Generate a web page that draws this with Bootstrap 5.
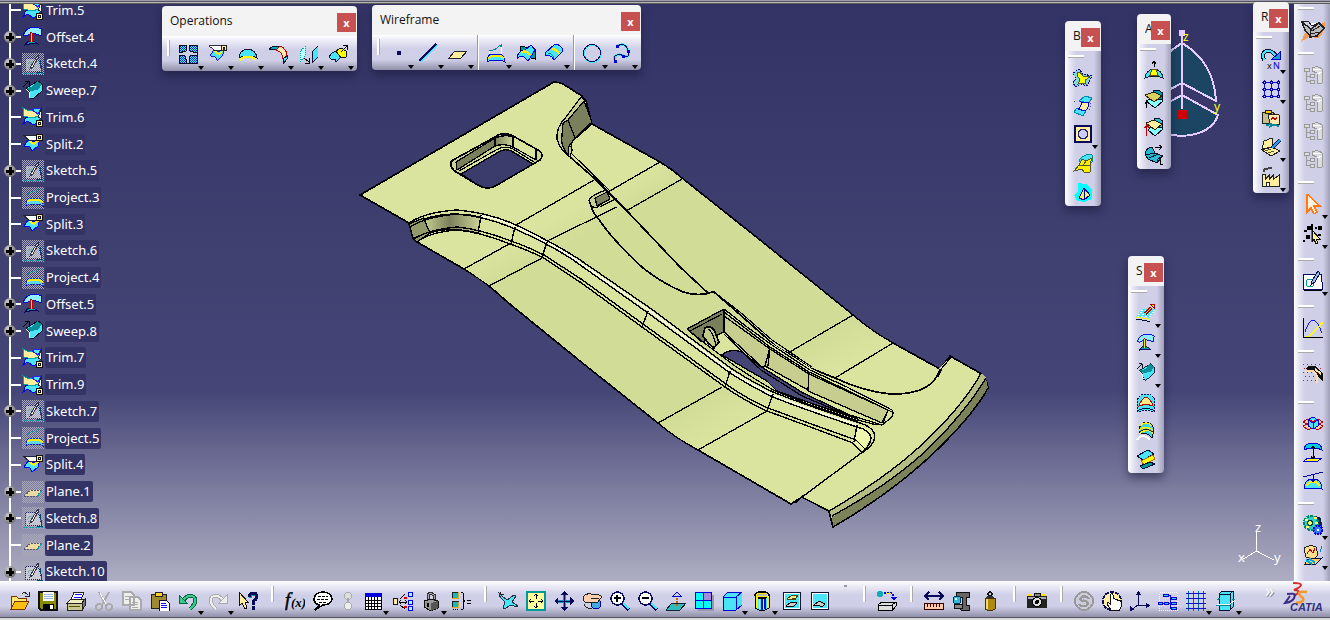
<!DOCTYPE html>
<html lang="en">
<head>
<meta charset="utf-8">
<meta name="viewport" content="width=device-width, initial-scale=1">
<title>CATIA - Generative Shape Design</title>
<link href="https://cdn.jsdelivr.net/npm/bootstrap@5.3.0/dist/css/bootstrap.min.css" rel="stylesheet">
<style>
:root { --navy:#333366; --face:#cfcfe7; --edge:#9090aa; }
body { font-family:"Noto Sans","Open Sans",sans-serif; font-size:13px; background:var(--navy); }
.strip { height:4px; background:linear-gradient(#9c9cae 0 1px,#55555f 1px 2px,#b8b8b8 2px 3px,#5c5c5c 3px 4px); }
.scene { background:linear-gradient(#333366 0%,#3f3f70 42%,#454577 67%,#75759a 82%,#adadc2 100%); min-height:0; }
.part { left:350px; top:71px; shape-rendering:crispEdges; }
.compass { right:64px; top:22px; shape-rendering:crispEdges; }
.triad { right:8px; bottom:12px; shape-rendering:crispEdges; }
.scene svg text { font-family:"Noto Sans",sans-serif; }
.defs { width:0; height:0; }

/* specification tree */
.tree-clip { inset:0 auto 0 0; width:160px; overflow:hidden; }
.tree { margin:-7px 0 0; height:calc(100% + 11px); color:#fff; }
.tree::before { content:""; position:absolute; left:9px; top:0; bottom:0; width:2px; background:#fff; }
.tree li { flex:1 1 0; min-height:0; padding-left:22px; position:relative; }
.tree li::before { content:""; position:absolute; left:11px; width:10px; height:2px; background:#fff; }
.tree .ico { width:22px; height:22px; shape-rendering:crispEdges; }
.tree a { color:#fff; background:var(--navy); line-height:21px; padding:0 2px 0 1px; border-radius:2px; margin-left:1px; }
.knot { position:absolute; left:4px; width:12px; height:12px; border-radius:50%; background:radial-gradient(circle at 35% 30%,#ccc,#777 70%); }
.knot::before,.knot::after { content:""; position:absolute; background:#000; left:2px; top:5px; width:8px; height:3px; }
.knot::after { left:5px; top:2px; width:3px; height:8px; }

/* toolbars */
.tool { flex:none; position:relative; border:0; padding:0; background:none; width:28px; height:28px; display:flex; align-items:center; justify-content:center; }
.tool svg { width:20px; height:20px; display:block; flex:none; shape-rendering:crispEdges; }
.slim { width:22px; }
.drop::after { content:""; position:absolute; right:0; bottom:-2px; border:3px solid transparent; border-top:4px solid #000; border-bottom:0; }
.across .drop { width:30px; padding-right:2px; }
.down .drop { height:30px; padding-bottom:2px; }
.down .drop::after { right:-1px; bottom:1px; }
.down .tool { align-self:center; }
.across { background:linear-gradient(#fff,#f2f2fa 3px,var(--face) 14px,var(--face) 70%,var(--edge)); }
.down { background:linear-gradient(90deg,#fff,#e6e6f4 5px,var(--face) 11px,var(--face) 80%,#a0a0b8); }
.grip { flex:none; background:#aaa; border:0 solid #fff; }
.across .grip { width:3px; height:16px; border-left-width:2px; margin:0 7px 0 9px; align-self:flex-start; }
.down .grip { width:16px; height:3px; border-top-width:2px; margin:8px 0 6px 3px; align-self:flex-start; }
.down .far { margin-top:14px; }
.rule { flex:none; width:2px; align-self:stretch; background:#fff; border-left:1px solid #999; margin:0 3px; }
.bottom { height:37px; border-bottom:1px solid #55555f; overflow:hidden; }
.bottom .tool { margin-top:4px; }
.bottom .drop::after { bottom:0; }
.bottom .grip { margin-top:5px; }
.foot { height:2px; background:#d8d8d8; }
.tick { width:20px; align-self:flex-start; height:6px; }
.tick i { display:block; width:3px; height:2px; background:#999; margin:4px 0 0 10px; }
.side { width:36px; padding:3px 0 0 1px; }
.side .big { height:28px; margin:0; }
.side .big svg { width:26px; height:26px; }

/* floating palettes */
.pal { border-radius:4px; box-shadow:0 5px 9px rgba(20,20,50,.5); overflow:hidden; }
.pal header { height:30px; background:#f3f3f3; padding-left:8px; color:#111; white-space:nowrap; overflow:hidden; }
.pal h2 { font-family:"Open Sans","Noto Sans",sans-serif; font-size:12px; line-height:30px; margin:0; font-weight:400; min-width:0; overflow:hidden; }
.shut { flex:none; width:19px; height:19px; border:0; padding:0; margin:7px 1px 0 0; background:#c75050; color:#fff; font-weight:700; font-size:11px; line-height:16px; }
.pal .across { height:35px; padding:0 3px 0 5px; }
.pal .across .grip { margin:4px 4px 0 0; }
.pal .down .grip { margin:4px 0 6px 3px; }
.slender { width:36px; }
.slim-pal { width:34px; }
.logo { width:52px; height:37px; flex:none; }
.more { color:#fff; text-shadow:1px 1px #888; text-decoration:none; font-size:18px; line-height:26px; margin:-4px 0 0 23px; }
</style>
</head>
<body class="vh-100 d-flex flex-column overflow-hidden">

<svg class="defs position-absolute" aria-hidden="true">
<defs>
<pattern id="dot" width="2" height="2" patternUnits="userSpaceOnUse"><path fill="#aaaabb" d="M0 0h1v1H0zM1 1h1v1H1z"/></pattern>
<pattern id="chk" width="2" height="2" patternUnits="userSpaceOnUse"><path fill="#4ae4f8" d="M0 0h2v2H0z"/><path fill="#0a30c0" d="M0 0h1v1H0zM1 1h1v1H1z"/></pattern>
</defs>
</svg>
<svg class="d-none" aria-hidden="true">
<symbol id="trim" viewBox="0 0 22 22"><path d="M1 18l3-7 6 1 4-7 5-3 1 9-8 8-2-1-4-3z" fill="#4ae4f8" stroke="#00f"/><path d="M1 2l6 3 4-1 6 6-7 2-8-2z" fill="#ffef9c" stroke="#0aa"/><path d="M10 4l4-2 5 1-3 5z" fill="#4ae4f8" stroke="#22f"/><path d="M19.500 1v12l-3-2z" fill="#fff" stroke="#223"/><path d="M14.500 14.500h6v6h-6z" fill="#ffef9c" stroke="#111"/><path d="M16.500 16.500h2v2h-2z" fill="#fff" stroke="#111"/></symbol>
<symbol id="split" viewBox="0 0 22 22"><path d="M2 13l4-6 5 2 7-4-2 8-6 5-2-4z" fill="#4ae4f8" stroke="#00f"/><path d="M7 8l5 3 5-4" fill="none" stroke="#fe0" stroke-width="2"/><path d="M1 2h14v5H7z" fill="#fff" stroke="#223"/><path d="M14.500 1.500h6v6h-6z" fill="#ffef9c" stroke="#111"/><path d="M16.500 3.500h2v2h-2z" fill="#fff" stroke="#111"/></symbol>
<symbol id="offset" viewBox="0 0 22 22"><path d="M1 9Q7-3 20 3l-1 7Q11 5 4 10z" fill="#8fefff" stroke="#00d"/><path d="M3 19q5-8 13-1-6-1-13 1z" fill="#099" stroke="#006"/><path d="M9.500 16V8" stroke="#b00" stroke-width="3"/><path d="M7 9l2-4 3 4z" fill="#b00"/><path d="M9.500 16V7" stroke="#ff0"/></symbol>
<symbol id="sweep" viewBox="0 0 22 22"><path d="M4 8l3 3 1 7 3 1 9-8V4l-4-3z" fill="#4ae4f8" stroke="#012"/><path d="M4 8l6-1 5-6 5 3-4 6-8 1z" fill="#0a9098"/><path d="M4 9l3 3 1 6" fill="none" stroke="#fff"/><path d="M1 7l6-6M3 1h4v4" fill="none" stroke="#000"/></symbol>
<symbol id="sketch" viewBox="0 0 22 22"><path fill="url(#dot)" d="M0 0h22v22H0z"/><path d="M3.500 5.500h13l3 13h-16z" fill="#eee" fill-opacity=".5" stroke="#226" stroke-dasharray="1 1"/><path d="M18 7l2 12h-5" fill="none" stroke="#047"/><path d="M9 15q-5 0-2-5l4-1" fill="none" stroke="#7aa"/><path d="M16 2l-7 11-1 3 3-2 6-11z" fill="#eec" stroke="#335"/><path d="M1 20.500h20" stroke="#0aa" stroke-dasharray="2 1"/></symbol>
<symbol id="project" viewBox="0 0 22 22"><path fill="url(#dot)" d="M0 0h22v22H0z"/><path d="M5 8q5-5 8-3l5-3" fill="none" stroke="#0aa" stroke-dasharray="2 1"/><path d="M4 19q0-7 4-8h9q4 2 4 8l-4-2H8z" fill="#5cd8ee" stroke="#11b" stroke-dasharray="2 1"/><path d="M5 15l4-2h8l4 2" fill="none" stroke="#fe0" stroke-width="2"/></symbol>
<symbol id="plane" viewBox="0 0 22 22"><path fill="url(#dot)" d="M0 0h22v22H0z"/><path d="M2 15l7-6h11l-5 6z" fill="#ecdca0" stroke="#557" stroke-dasharray="2 1"/><path d="M15 16l5-7" stroke="#0aa"/></symbol>

<symbol id="join" viewBox="0 0 20 20"><path d="M1 1h8l-1 6-7 2zM11 1h8v8l-7-2zM1 11l6 1 2 7H1zM12 12l7-1v8h-8z" fill="url(#chk)" stroke="#012"/></symbol>
<symbol id="dome" viewBox="0 0 20 20"><path d="M1 14q0-8 9-9 8 1 9 9l-4-2H5z" fill="#4ae4f8" stroke="#113"/><path d="M2 16l4-3h8l4 3" fill="none" stroke="#ff0" stroke-width="2"/></symbol>
<symbol id="fillet" viewBox="0 0 20 20"><path d="M1 5l5-3h6l-4 4z" fill="#0ab" stroke="#113"/><path d="M8 6l4-4q7 3 7 10l-4 3q0-7-7-9z" fill="#ffe9b0" stroke="#b00"/><path d="M15 15l4-3v3l-4 5z" fill="#4ae4f8" stroke="#113"/></symbol>
<symbol id="mirror" viewBox="0 0 20 20"><path d="M2 8l5-6v10l-5 6z" fill="#bff" stroke="#0aa" stroke-dasharray="1 1"/><path d="M14 8l6-6v11l-6 6z" fill="#4ae4f8" stroke="#113"/><path d="M6 14l5 4M11 14v5H7" stroke="#000" fill="none"/></symbol>
<symbol id="extrap" viewBox="0 0 20 20"><path d="M1 13q3-5 7-6l5 6-5 5q0-4-4-2z" fill="#4ae4f8" stroke="#113"/><path d="M8 7l5-3 5 3v6l-5 1z" fill="#ff0" stroke="#111"/><path d="M13 8l6-6M15 1.500h4v4" fill="none" stroke="#000"/></symbol>
<symbol id="point" viewBox="0 0 20 20"><path fill="#0a0a5a" d="M9 8h4v4H9z"/></symbol>
<symbol id="line" viewBox="0 0 20 20"><path stroke="#4ae4f8" stroke-width="2" d="M2 19L19 2"/><path stroke="#0a0a5a" stroke-width="1.500" d="M1 18L18 1"/></symbol>
<symbol id="pln" viewBox="0 0 20 20"><path d="M1 15l6-7h12l-6 7z" fill="#ffef9c" stroke="#223"/></symbol>
<symbol id="proj" viewBox="0 0 20 20"><path d="M3 8q7-1 9-4 3-3 3 0V1" fill="none" stroke="#089"/><path d="M3 8v6M15 4v9" stroke="#fff"/><path d="M1 19q0-6 4-8h9q5 2 5 8l-4-2H5z" fill="#4ae4f8" stroke="#00d"/><path d="M2 15l4-2h8l4 2" fill="none" stroke="#fe0" stroke-width="2"/></symbol>
<symbol id="inter" viewBox="0 0 20 20"><path d="M4 3l15 3v10L4 12z" fill="#099" stroke="#000"/><path d="M1 14q2-7 8-7l6-5 4 5-7 11-4-4-4-1-3 3z" fill="#4ae4f8" stroke="#00d"/><path d="M5 9q6-2 9 3" fill="none" stroke="#fe0" stroke-width="2"/></symbol>
<symbol id="para" viewBox="0 0 20 20"><path d="M1 10L11 1q7 1 8 7l-9 9-2-3q-3-2-7-2z" fill="#4ae4f8" stroke="#00d"/><path d="M4 10q4 0 6 5" fill="none" stroke="#089"/><path d="M8 6q5 0 7 5" fill="none" stroke="#fe0" stroke-width="2"/></symbol>
<symbol id="circ" viewBox="0 0 20 20"><circle cx="10.500" cy="10.500" r="8.500" fill="none" stroke="#4ae4f8" stroke-width="2"/><circle cx="10" cy="10" r="8.500" fill="none" stroke="#0a0a5a" stroke-width="1"/></symbol>
<symbol id="spl" viewBox="0 0 20 20"><path d="M5 3q8-4 11 4t-4 6q-4-2-7-1-4 1-2 6" fill="none" stroke="#4ae4f8" stroke-width="2.500"/><path d="M5 3q8-4 11 4t-4 6q-4-2-7-1-4 1-2 6" fill="none" stroke="#0a0a5a"/><path d="M4 2h3v3H4zM15 7h3v3h-3zM10 12h3v3h-3zM2 17h3v3H2z" fill="#00d"/></symbol>

<symbol id="fillp" viewBox="0 0 20 20"><path d="M0 5l6-4 4 5 9 2-5 10-6-2-5 3-3-4 3-4z" fill="#7fd8d8" stroke="#009" stroke-dasharray="2 1"/><path d="M4 4q4 0 6 4l7 1-5 3 1 4q-4-2-8 0l2-4-3-5z" fill="#ff0" stroke="#553"/></symbol>
<symbol id="loft" viewBox="0 0 20 20"><path d="M6 5l6-5 7 2-3 5zM1 16l3-4 9 3-3 5z" fill="#4ae4f8" stroke="#08a"/><path d="M5 13q4-2 3-7l8 1q-1 6-4 8z" fill="#ffef9c" stroke="#00d"/><path d="M1 5l3 2M16 13l3 2M17 4v9" stroke="#556" stroke-dasharray="1 2"/></symbol>
<symbol id="hole" viewBox="0 0 20 20"><path d="M2 2h16v16H2z" fill="#ffef9c" stroke="#0a0a5a" stroke-width="2"/><circle cx="10" cy="10" r="4.500" fill="#ccf" stroke="#226" stroke-width="1.500"/></symbol>
<symbol id="blend" viewBox="0 0 20 20"><path d="M6 6q6-7 13-5v7l-7 6z" fill="#4ae4f8" stroke="#089"/><path d="M1 17l5-6 3-6 4 2 6-3-2 7v7l-5 1-3-4z" fill="#fe0" stroke="#553"/><path d="M6 11l4 1 3-5M10 12l7-1" stroke="#553" fill="none"/></symbol>
<symbol id="poly" viewBox="0 0 20 20"><path d="M5 1l8 1 6 5v10l-7 3-8-1-3-6 4-3z" fill="#0ff"/><path d="M6 16l5-10 6 7-6 5zM11 6v11" fill="#ffef60" stroke="#00a"/></symbol>
<symbol id="bump" viewBox="0 0 20 20"><path d="M1 17q1-8 9-9 8 1 9 9-4-2-9-2t-9 2z" fill="#4ae4f8" stroke="#123"/><path d="M6 14l2-6h4l2 6z" fill="#ff0" stroke="#650"/><path d="M10 6V1M8 3l2-3 2 3" stroke="#000" fill="none"/></symbol>
<symbol id="lay" viewBox="0 0 20 20"><path d="M9 2l5-1 5 3-1 7-4 3z" fill="#099" stroke="#012"/><path d="M2 12l4-2 12 1 1 1-8 7z" fill="#8ff" stroke="#012"/><path d="M1 6l9-3 8 4-8 6z" fill="#d8d060" stroke="#320"/><path d="M2.500 19v-6M1 15l2-3 2 3" stroke="#000" fill="none"/></symbol>
<symbol id="lay2" viewBox="0 0 20 20"><path d="M10 2l4-1 5 3-1 7-4 3z" fill="#29b8cf" stroke="#012"/><path d="M4 13l3-3 11 1 1 1-8 7z" fill="#8ff" stroke="#012"/><path d="M2 6l8-3 8 4-7 6z" fill="#ffef9c" stroke="#320"/><path d="M2.500 19V10M1 11l2-3 2 3" stroke="#b00" stroke-width="1.500" fill="none"/></symbol>
<symbol id="dev" viewBox="0 0 20 20"><path d="M1 9q1-6 7-7l3 6 8 3-6 7-9-4z" fill="#29b8cf" stroke="#012"/><path d="M1 10l10-2M5 13l9-4M13 18v-3l5-4" stroke="#012" fill="none"/><path d="M11 2h6M15 0l3 2-3 3M16 15v4h3" stroke="#000" fill="none"/></symbol>
<symbol id="repeat" viewBox="0 0 20 20"><path d="M3 11Q0 3 6 2t10 7" fill="none" stroke="#013" stroke-width="4"/><path d="M3 11Q0 3 6 2t10 7" fill="none" stroke="#4ae4f8" stroke-width="2"/><path d="M11 10h8V3z" fill="#29c" stroke="#00b"/><text x="6" y="20" font-size="9" fill="#111">x</text><text x="12" y="20" font-size="9" fill="#00d">N</text></symbol>
<symbol id="gridp" viewBox="0 0 20 20"><path d="M3.500 1v18M10.500 1v18M17.500 1v18M1 3.500h18M1 10.500h18M1 17.500h18" stroke="#11c"/><g fill="#ccf" stroke="#00b"><path d="M2.500 2.500h2v2h-2zM9.500 2.500h2v2h-2zM16.500 2.500h2v2h-2zM2.500 9.500h2v2h-2zM9.500 9.500h2v2h-2zM16.500 9.500h2v2h-2zM2.500 16.500h2v2h-2zM9.500 16.500h2v2h-2zM16.500 16.500h2v2h-2z"/></g></symbol>
<symbol id="clipcat" viewBox="0 0 20 20"><path d="M1 3h10l3 2v9H1z" fill="#c8bd8c" stroke="#222"/><path d="M4 1h6v3H4z" fill="#fc0" stroke="#222"/><path d="M7 5l11 1v9H9z" fill="#ffe9b0" stroke="#222"/><path d="M10 11l2-3 2 3 2-3" fill="none" stroke="#b00"/><path d="M8 18q6-4 10 0M5 16l6-1" stroke="#089" stroke-width="2" fill="none"/></symbol>
<symbol id="book" viewBox="0 0 20 20"><path d="M1 12L3 4l8-3 1 9zM1 13l10-3 8 4-9 5z" fill="#ffef9c" stroke="#222"/><path d="M4 14l6-2M7 16l6-2" stroke="#553"/><path d="M19 3l-8 8" stroke="#013" stroke-width="3"/><path d="M19 3l-8 8" stroke="#29f" stroke-width="1.500"/></symbol>
<symbol id="plant" viewBox="0 0 20 20"><path d="M1.500 19V7.500h3V12l4-4v4l4-4v4l6-4v11z" fill="#ffef9c" stroke="#222"/><path d="M3 5q0-4 3-3 3-2 5-1" stroke="#444" stroke-width="2" fill="none"/><path d="M5.500 19v-4h3v4z" fill="#fff" stroke="#222"/></symbol>
<symbol id="vec" viewBox="0 0 20 20"><path d="M0 14l6-8h14l-6 9q-7-2-14-1z" fill="#4ae4f8"/><path d="M2 11.500h15M4 9.500h14M1 13.500h14M5 7.500h14" stroke="#fff" stroke-dasharray="2 2"/><path d="M0 15q7-1 14 2" stroke="#ff0" fill="none"/><path d="M0 17q7-1 14 2" stroke="#013" fill="none"/><path d="M9 11l6-6" stroke="#a00" stroke-width="3"/><path d="M9 11l6-6" stroke="#fe0"/><path d="M14.500 1.500h4v4z" fill="#fe0" stroke="#a00"/></symbol>
<symbol id="fillc" viewBox="0 0 20 20"><path d="M2 19Q-2 1 10 1t8 18l-8-2z" fill="#4ae4f8" stroke="#0a0a5a" stroke-dasharray="2 1"/><path d="M3 13q2-7 7-9 5 2 7 9l-7-2z" fill="#fe8" stroke="#b00"/><path d="M1 18q9-5 18 0" stroke="#013" fill="none"/></symbol>
<symbol id="multi" viewBox="0 0 20 20"><path d="M3 9q1-7 7-8 7 1 8 8l-2 8q-4-6-12-4z" fill="#39d5e5" stroke="#012"/><path d="M3 9q7-5 14 0M3 13q7-7 14-1M4 5q6-6 12 0" fill="none" stroke="#fe0" stroke-width="1.500"/><path d="M3 11q7-5 14 0" fill="none" stroke="#222"/><path d="M1 19q5-8 13 0" fill="none" stroke="#fff" stroke-width="2"/></symbol>
<symbol id="blnd" viewBox="0 0 20 20"><path d="M1 7l11-6 6 4-11 6z" fill="#4ae4f8" stroke="#013"/><path d="M5 12l12-6 2 4-11 6z" fill="#ff0" stroke="#b60"/><path d="M4 17l10-4 5 2-12 5z" fill="#099" stroke="#013"/></symbol>

<symbol id="wb" viewBox="0 0 26 26"><path d="M1 25l4-9 20-11q0 12-7 16l-9-1z" fill="#f09a58"/><path d="M2 5l9 7-1 7-5-6zM11 12l8-6 5 5-7 8-7 1z" fill="#bbb" stroke="#222" stroke-width="1.500"/><path d="M2 5l6-1 4 5 6-3" fill="#fff" stroke="#222"/><path d="M12 14l8-5M11 17l8-2" stroke="#222"/></symbol>
<symbol id="ghost" viewBox="0 0 20 20"><path d="M1.500 3.500h5v3h-5zM3.500 7v10M3 11.500h4M3 16.500h4M7.500 9.500h4v3h-4zM7.500 15.500h4v3h-4zM9 3q6-3 10 1v14l-5 1V8L9 6z" fill="#ddd" stroke="#999"/><path d="M10 4.500h8M14 9l5-2" stroke="#fff"/></symbol>
<symbol id="sel" viewBox="0 0 20 20"><path d="M4 0l13 12h-6l3 6-3 2-3-6-4 4z" fill="#fff0e0" stroke="#ff7a10" stroke-width="1.500"/></symbol>
<symbol id="trap" viewBox="0 0 20 20"><g fill="#000"><ellipse cx="7" cy="4" rx="3" ry="2.500"/><ellipse cx="17" cy="4" rx="2.500" ry="2"/><ellipse cx="5" cy="13" rx="2.500" ry="2"/><path d="M1 6h3v2H1zM0 16h2v2H0zM8 0h2v2H8zM12 3h2v2h-2zM15 10h3v2h-3z"/></g><path d="M8 6v12" stroke="#099"/><path d="M9 6l8 9h-4l2 4-2 1-2-5-2 3z" fill="#ffef9c" stroke="#111"/></symbol>
<symbol id="skt" viewBox="0 0 20 20"><path d="M.500 3.500h18l1 15H.500z" fill="#fff" stroke="#0a0a5a"/><circle cx="7" cy="12" r="4" fill="none" stroke="#099"/><path d="M15 0L9 10l-1 4 4-3 5-9z" fill="#9bd" stroke="#0a0a5a"/><path d="M19 19H1" stroke="#000"/></symbol>
<symbol id="graph" viewBox="0 0 20 20"><path d="M.500 0v19.500H20" fill="none" stroke="#000"/><path d="M2 14Q10-10 19 15" fill="none" stroke="#11f"/><path d="M2 18.500h4L20 4" stroke="#ff0" stroke-width="1.500" fill="none"/></symbol>
<symbol id="wand" viewBox="0 0 20 20"><path d="M0 1.500h20M1 5.500h18M0 9.500h18M2 13.500h16M0 17.500h14" stroke="#b22" stroke-dasharray="1 3"/><path d="M2 6l4-3h6l8 8v8l-5-5-3-5z" fill="#111"/><path d="M2 7.500h8l4 5v7M12 6l6 5" stroke="#fda" stroke-width="2" fill="none"/></symbol>
<symbol id="cube3" viewBox="0 0 20 20"><path d="M0 8l5-3 15 7-5 4zM20 8l-5-3L0 12l5 4z" fill="#fc9" stroke="#b00"/><path d="M5 6l5-3 5 3v6l-5 3-5-3zM5 6l5 3 5-3M10 9v6" fill="#4ae4f8" stroke="#00d"/></symbol>
<symbol id="updn" viewBox="0 0 20 20"><path d="M1 8q0-7 9-7t9 7l-5-2H6z" fill="#0cd" stroke="#00d"/><path d="M1 19l4-3h14l-4 3z" fill="#ff0" stroke="#00d"/><path d="M10 5v12M8 7l2-3 2 3M8 14l2 3 2-3" stroke="#000" fill="none"/></symbol>
<symbol id="curv" viewBox="0 0 20 20"><path d="M1 19q0-10 9-10t9 10l-4-1H5z" fill="#4ae4f8" stroke="#00d"/><path d="M3 16l4-4h6l4 4" fill="none" stroke="#fe0" stroke-width="1.500"/><path d="M0 7l20-5M10 4v7M8 9l2 3 2-3" stroke="#00a" fill="none"/></symbol>
<symbol id="gears" viewBox="0 0 20 20"><path d="M12 1l6 2 1 8-4 4z" fill="#124"/><circle cx="8" cy="8" r="7" fill="#3cc" stroke="#086" stroke-width="2" stroke-dasharray="3 1"/><path d="M2 5h3M11 3h3M3 12h3M12 8h3" stroke="#ff6" stroke-width="2"/><circle cx="7" cy="8" r="2.500" fill="#ff6" stroke="#043" stroke-width="1.500"/><circle cx="15" cy="15" r="4.500" fill="#37f" stroke="#00c" stroke-width="2" stroke-dasharray="2 1"/><path fill="#fff" d="M14 14h2v2h-2z"/></symbol>
<symbol id="hand2" viewBox="0 0 20 20"><path d="M1 3q5-4 12-1l2 8-4 4-8-2z" fill="#ffdf8c" stroke="#222"/><path d="M4 9l3-5 3 4 2-5" stroke="#b00" fill="none"/><path d="M2 19q2-7 9-5l8-1-6 6z" fill="#fc6" stroke="#013"/><path d="M3 15l6 4M6 13l6 5" stroke="#0ad" stroke-width="2"/><path d="M19 1l-2 6" stroke="#08c"/></symbol>

<symbol id="open" viewBox="0 0 20 20"><path d="M1 18V5h5l2 2h8v4" fill="#ffe870" stroke="#730"/><path d="M1 18l4-8h14l-4 8z" fill="#f8c010" stroke="#730"/><path d="M12 3q3-3 6 1M19 1v4h-4" fill="none" stroke="#222"/></symbol>
<symbol id="save" viewBox="0 0 20 20"><path d="M1 1h18v18H3l-2-2z" fill="#8a8a00" stroke="#111" stroke-width="1.500"/><path d="M5 1h11v9H5z" fill="#fff"/><path d="M6 3.500h9M6 5.500h9M6 7.500h9" stroke="#9bd"/><path d="M5 13h11v6H5z"/><path fill="#fff" d="M12 14h3v4h-3z"/></symbol>
<symbol id="print" viewBox="0 0 20 20"><path d="M5 9L8 1h10l-3 8z" fill="#fff" stroke="#222"/><path d="M9 3.500h7M8 6.500h7" stroke="#11f"/><path d="M1 12l4-4h14l-3 4z" fill="#eeecc0" stroke="#222"/><path d="M1 12h15v7H1z" fill="#c8c890" stroke="#222"/><path d="M16 12l3-4v7l-3 4z" fill="#777" stroke="#222"/><path d="M3 15.500h11" stroke="#550"/></symbol>
<symbol id="cut" viewBox="0 0 20 20"><path d="M5 1l7 13M15 1L8 14" stroke="#aaa" stroke-width="2"/><circle cx="5" cy="16" r="3" fill="none" stroke="#aaa" stroke-width="2"/><circle cx="15" cy="16" r="3" fill="none" stroke="#aaa" stroke-width="2"/><path d="M6 2l6 11" stroke="#fff"/></symbol>
<symbol id="copy" viewBox="0 0 20 20"><path d="M1 1h8l3 3v10H1zM8 6h8l3 3v10H8z" fill="#eee" stroke="#aaa" stroke-width="1.500"/><path d="M3 5.500h5M3 8.500h4M10 11.500h6M10 13.500h6M10 16.500h6" stroke="#aaa"/></symbol>
<symbol id="paste" viewBox="0 0 20 20"><path d="M1 3h15v14H1z" fill="#a08a30" stroke="#222"/><path d="M5 1h7v4H5z" fill="#fc3" stroke="#222"/><path d="M9 9h7l3 3v8H9z" fill="#fff" stroke="#113"/><path d="M11 12.500h5M11 14.500h6M11 16.500h6" stroke="#11f"/></symbol>
<symbol id="undo" viewBox="0 0 20 20"><path d="M4 11q6-9 12-5 4 5-4 12" fill="none" stroke="#064" stroke-width="4"/><path d="M4 11q6-9 12-5 4 5-4 12" fill="none" stroke="#3ec98a" stroke-width="2"/><path d="M1 4v8h8z" fill="#3ec98a" stroke="#064"/></symbol>
<symbol id="redo" viewBox="0 0 20 20"><path d="M16 11Q10 2 4 6q-4 5 4 12" fill="none" stroke="#aaa" stroke-width="4"/><path d="M16 11Q10 2 4 6q-4 5 4 12" fill="none" stroke="#eee" stroke-width="2"/><path d="M19 4v8h-8z" fill="#eee" stroke="#aaa"/></symbol>
<symbol id="help" viewBox="0 0 20 20"><path d="M1 1l9 10H7l2 6-2 1-3-6-3 3z" fill="#ffef9c" stroke="#111"/><path d="M12 7q0-4 4-4t3 3q0 2-4 4v4M15 16v3" fill="none" stroke="#099" stroke-width="3"/><path d="M11 6q0-4 4-4t4 4q0 2-4 4v4M15 15v4" fill="none" stroke="#0a0a5a" stroke-width="3"/></symbol>
<symbol id="fx" viewBox="0 0 20 20"><text x="0" y="15" font-family="Liberation Serif,serif" font-style="italic" font-size="19" stroke="#000" stroke-width=".500">f</text><text x="6" y="16" font-family="Liberation Serif,serif" font-style="italic" font-weight="700" font-size="13">(x)</text></symbol>
<symbol id="note" viewBox="0 0 20 20"><path d="M6 14q-5-2-5-6Q2 1 10 1t9 7q-1 6-9 6l-8 5z" fill="#fff" stroke="#000" stroke-width="1.500"/><path d="M5 5.500h10M4 8.500h12M6 11.500h8" stroke="#000" stroke-dasharray="3 1"/></symbol>
<symbol id="ghost2" viewBox="0 0 20 20"><circle cx="10" cy="5" r="3.500" fill="#ddd" stroke="#aaa"/><path d="M10 7v5" stroke="#aaa" stroke-width="2"/><circle cx="10" cy="15" r="3.500" fill="#eee" stroke="#aaa"/></symbol>
<symbol id="tbl" viewBox="0 0 20 20"><path d="M2.500 2.500h16v16h-16z" fill="#fff" stroke="#000"/><path d="M2 2h17v4H2z" fill="#00d"/><path d="M2 9.500h16M2 12.500h16M5.500 6v13M8.500 6v13M11.500 6v13M14.500 6v13M2 15.500h16" stroke="#000"/></symbol>
<symbol id="links" viewBox="0 0 20 20"><path d="M.500 7.500h4v6h-4z" fill="#ffef9c" stroke="#113"/><path d="M7 11h6M7 8l5-5M7 14l5 4M8 9l-2 2 2 2M12 9l2 2-2 2" stroke="#000" fill="none"/><path d="M15.500 1.500h4v4h-4zM15.500 9.500h4v4h-4zM15.500 15.500h4v4h-4z" fill="#9ff" stroke="#00e"/><path d="M11 6.500h3M11 15.500h3" stroke="#d00" stroke-width="2"/></symbol>
<symbol id="lock" viewBox="0 0 20 20"><path d="M7 9V4q2-4 6 0v6" fill="none" stroke="#333" stroke-width="3"/><path d="M7 8V4q2-3 6 0v5" fill="none" stroke="#aaa"/><path d="M3 10l7-2 7 2v7l-7 3-7-4z" fill="#999" stroke="#111"/><path d="M10 12l7-2v7l-7 3z" fill="#555"/><path d="M7 12v4" stroke="#000" stroke-width="2"/></symbol>
<symbol id="equ" viewBox="0 0 20 20"><path d="M1 1h6v6H1zM1 10h6v6H1z" fill="#1bb" stroke="#222"/><path d="M1 7.500h6.500V1M1 16.500h6.500v-6" stroke="#da2" fill="none"/><path d="M2 18.500h5" stroke="#000" stroke-dasharray="1 1"/><path d="M10 1q3 0 2 5 0 4 2 4-2 0-2 5 1 4-2 4" fill="none" stroke="#000"/><path d="M16 9.500h4M16 12.500h4" stroke="#000"/></symbol>
<symbol id="fly" viewBox="0 0 20 20"><path d="M1 2l3 3 5 4 7-5 2 1-4 6 6 4v1l-8-2-5 4-2-1 2-6-5-5z" fill="#4ae4f8" stroke="#234"/><path d="M1 6l5-3M2 1l2 4" stroke="#222"/></symbol>
<symbol id="fit" viewBox="0 0 20 20"><path d="M1 1h18v18H1z" fill="#ffff99" stroke="#099" stroke-width="1.500"/><path d="M10 3v5M10 12v5M3 10h5M12 10h5M8 5l2-2 2 2M8 15l2 2 2-2M5 8l-2 2 2 2M15 8l2 2-2 2" stroke="#000" fill="none"/></symbol>
<symbol id="pan" viewBox="0 0 20 20"><path d="M10 2v16M2 10h16" stroke="#29b" stroke-width="3"/><path d="M10 0l4 4H6zM10 20l-4-4h8zM0 10l4-4v8zM20 10l-4 4V6z" fill="#0a0a5a"/><path d="M10 3v14M3 10h14" stroke="#0a0a5a"/></symbol>
<symbol id="rot" viewBox="0 0 20 20"><circle cx="14" cy="13" r="5" fill="#4ad" stroke="#00a"/><path d="M1 6q3-4 8-3l8 1q3 1 2 3l-3 4-9 1q-6 0-6-6z" fill="#fdd0b0" stroke="#222"/><path d="M9 7.500h8M2 13q1 4 8 5" fill="none" stroke="#222"/></symbol>
<symbol id="zin" viewBox="0 0 20 20"><path d="M12 12l7 7" stroke="#0a0a5a" stroke-width="4"/><path d="M12 11l7 7" stroke="#4ae4f8" stroke-width="1.500"/><circle cx="7.500" cy="7.500" r="6.500" fill="#fff" stroke="#0a0a5a" stroke-width="1.500"/><path d="M7 4v7M4 7h7" stroke="#000" stroke-width="2"/></symbol>
<symbol id="zout" viewBox="0 0 20 20"><path d="M12 12l7 7" stroke="#0a0a5a" stroke-width="4"/><path d="M12 11l7 7" stroke="#4ae4f8" stroke-width="1.500"/><circle cx="7.500" cy="7.500" r="6.500" fill="#fff" stroke="#0a0a5a" stroke-width="1.500"/><path d="M4 7h7" stroke="#000" stroke-width="2"/></symbol>
<symbol id="norm" viewBox="0 0 20 20"><path d="M0 19l6-7h14l-6 7z" fill="#3bb" stroke="#123"/><path d="M11 15V5" stroke="#c60" stroke-dasharray="2 1" stroke-width="1.500"/><path d="M7 5l4-4 4 4z" fill="#ccf" stroke="#00c"/></symbol>
<symbol id="views" viewBox="0 0 20 20"><path d="M4 4h16v16H4z" fill="#99a"/><path d="M1.500 1.500h16v16h-16z" fill="#0ff" stroke="#00d"/><path d="M10 2h7v7h-7z" fill="#a8d"/><path d="M9.500 2v15M2 9.500h15" stroke="#00d"/></symbol>
<symbol id="iso" viewBox="0 0 20 20"><path d="M1 6l5-5h14v13l-6 5H1zM1 6h13v13M14 6l6-5" fill="#4ae4f8" stroke="#00d"/></symbol>
<symbol id="shade" viewBox="0 0 20 20"><path d="M3 4v13q7 5 14 0V4" fill="#4ae4f8" stroke="#000"/><path d="M9 6h5v12l-5 1z" fill="#11b"/><path d="M7.500 7v11M11.500 7v11" stroke="#ff0"/><ellipse cx="10" cy="4" rx="7" ry="3" fill="#bbb" stroke="#000" stroke-width="2"/><path d="M4.500 5v12M15.500 5v12" stroke="#fe0" stroke-width="2"/><ellipse cx="10" cy="4" rx="6" ry="2" fill="none" stroke="#fe0"/></symbol>
<symbol id="hide" viewBox="0 0 20 20"><path d="M1.500 1.500h17v17h-17z" fill="#fff" stroke="#113"/><path d="M3 3h14v14H3z" fill="#4ae4f8"/><path d="M5 8l5-4h6l-3 5zM8 9l5-2" fill="#ee9" stroke="#540"/><path d="M4 15l5-4 6 1-4 4z" fill="#ccc" stroke="#000"/></symbol>
<symbol id="swap" viewBox="0 0 20 20"><path d="M1.500 1.500h17v17h-17z" fill="#fff" stroke="#113"/><path d="M3 3h14v14H3z" fill="#4ae4f8"/><path d="M4 14l5-4 6 3-3 3-4-2z" fill="#ccc" stroke="#000"/></symbol>
<symbol id="move" viewBox="0 0 20 20"><circle cx="3" cy="3" r="3" fill="#1ab"/><path d="M7 2q8-2 10 4" fill="none" stroke="#00d" stroke-dasharray="2 1" stroke-width="2"/><path d="M9 2h5" stroke="#fe0"/><path d="M14 6h6l-3 4z" fill="#00d"/><path d="M1 14l4-3h14v4l-3 4H1zM1 14h14v5M15 14l4-3" fill="#ddd" stroke="#000"/></symbol>
<symbol id="meas" viewBox="0 0 20 20"><path d="M1 5h18M5 1L1 5l4 4M15 1l4 4-4 4" stroke="#0a0a5a" fill="none" stroke-width="1.500"/><path d="M.500 12.500h19v6H.500z" fill="#fdc9a8" stroke="#300"/><path d="M3.500 13v3M6.500 13v3M9.500 13v3M12.500 13v3M15.500 13v3" stroke="#300"/></symbol>
<symbol id="clamp" viewBox="0 0 20 20"><path d="M4 1h13v5h-3v8h3v5H9l-1-3h2V6H4z" fill="#666" stroke="#111"/><path d="M2 13h8v4H2z" fill="#888" stroke="#111"/><circle cx="5" cy="9" r="4" fill="#3bd" stroke="#035"/><path fill="#fff" d="M3 7h2v2H3z"/></symbol>
<symbol id="mass" viewBox="0 0 20 20"><circle cx="10" cy="3" r="2" fill="none" stroke="#111" stroke-width="1.500"/><path d="M5 7h10v11q-5 3-10 0z" fill="#b08a10" stroke="#430"/><path d="M7 8v10" stroke="#ed6" stroke-width="2"/><path d="M5 7l3-2h4l3 2z" fill="#333"/></symbol>
<symbol id="cam" viewBox="0 0 20 20"><path d="M0 5h20v12H0z" fill="#222"/><path d="M1 6h18v2H1z" fill="#aab"/><path d="M7 2h6v3H7z" fill="#888" stroke="#111"/><path d="M1 3h4v2H1zM15 3h3v2h-3z" fill="#fd0"/><circle cx="10" cy="11" r="4.500" fill="#ddd" stroke="#000"/><circle cx="10" cy="11" r="2" fill="#000"/></symbol>
<symbol id="upd" viewBox="0 0 20 20"><circle cx="10" cy="10" r="9" fill="#ccd" stroke="#999" stroke-width="2"/><path d="M15 8q-3-4-7-2-3 2 0 4 3-1 5 1 2 3-2 4-4 1-6-2" fill="none" stroke="#999" stroke-width="2.500"/></symbol>
<symbol id="hand" viewBox="0 0 20 20"><circle cx="10" cy="10" r="9" fill="#ffef9c" stroke="#0a0a5a" stroke-width="2" stroke-dasharray="4 1"/><path d="M9 19l-4-6q0-3 3 0V4q2-3 3 0v4q2-1 3 1 2-1 2 1 3-1 3 1v5l-2 4z" fill="#fff" stroke="#111"/></symbol>
<symbol id="axis" viewBox="0 0 20 20"><path d="M8.500 14V1M8 14.500h11M8 14l-7 5" stroke="#0a0a5a"/><path d="M8.500 0l3 4h-6zM20 14.500l-4 3v-6zM0 20v-5l4 4z" fill="#0a0a5a"/></symbol>
<symbol id="flow" viewBox="0 0 20 20"><path d="M1.500 1.500h18v18h-18z" fill="none" stroke="#fff" stroke-dasharray="1 1"/><path d="M3 12.500h10M12.500 4v14M6 4.500h6M12 17.500h3" stroke="#11c"/><path d="M5.500 3.500h5v2h-5zM13.500 6.500h5v2h-5zM6.500 11.500h4v2h-4zM.500 11.500h4v2h-4zM13.500 11.500h5v2h-5zM13.500 16.500h5v2h-5z" fill="#3cc" stroke="#00d"/></symbol>
<symbol id="mesh" viewBox="0 0 20 20"><path d="M2.500 0v20M7.500 0v20M12.500 0v20M17.500 0v20" stroke="#069"/><path d="M0 2.500h20M0 7.500h20M0 12.500h20M0 17.500h20" stroke="#11c"/></symbol>
<symbol id="box" viewBox="0 0 20 20"><path d="M3 3l3-3h11v16l-3 3H3zM3 3h11v16M14 3l3-3" fill="#4ae4f8" stroke="#013"/><path d="M1 9l3-2M0 14h14l5-5-3-1" stroke="#089" fill="none"/><path d="M1 13h13l5-4" stroke="#fff" fill="none"/></symbol>
</svg>

<div class="strip flex-shrink-0"></div>
<div class="d-flex flex-grow-1" style="min-height:0">
<main class="scene flex-grow-1 position-relative">

<svg class="part position-absolute" width="650" height="465" viewBox="350 75 650 465" fill="none" stroke="#000" stroke-width="1.700" stroke-linejoin="round" role="img" aria-label="Surface part">
<defs>
<linearGradient id="b1" gradientUnits="userSpaceOnUse" x1="560" y1="216" x2="573" y2="240"><stop stop-color="#dbe49f"/><stop offset="1" stop-color="#d1dc96"/></linearGradient>
<linearGradient id="b2" gradientUnits="userSpaceOnUse" x1="755" y1="369" x2="776" y2="407"><stop stop-color="#d1dc96"/><stop offset="1" stop-color="#dbe49f"/></linearGradient>
<linearGradient id="w1"><stop stop-color="#c9d092"/><stop offset=".45" stop-color="#7b805c"/><stop offset="1" stop-color="#cdd596"/></linearGradient>
<linearGradient id="w2"><stop stop-color="#7b805c"/><stop offset="1" stop-color="#cdd596"/></linearGradient>
<linearGradient id="sb" gradientUnits="userSpaceOnUse" x1="0" y1="346" x2="0" y2="426"><stop stop-color="#424273"/><stop offset="1" stop-color="#505080"/></linearGradient>
</defs>
<path id="sheet" fill="#dbe49f" d="M360 195L554 82Q559 82 563 84L582 96 586 101 592 124 660 162Q672 169 682 178L760 240 853 315Q872 332 893 343L940 369 950 356 980 373Q986 376 988 388Q975 412 940 447 895 491 833 527L829 511 802 497 791 504 698 450Q676 438 658 423L580 361 511 305 489 286Q478 277 464 269L417 242 413 238 409 223z"/>
<g stroke="none">
<path fill="url(#b1)" d="M464 268L660 163Q672 170 681 179L489 285z"/>
<path fill="#d1dc96" d="M489 285L682 179 760 241 852 315 658 422 580 360z"/>
<path fill="url(#b2)" d="M658 422L853 316Q872 332 892 343L698 449Q676 438 658 422z"/>
<path fill="#dbe49f" d="M834 378Q900 405 938 370L950 357 980 374 968 398 829 510 803 497 868 450Q880 432 857 423L810 406 780 385z"/>
</g>
<path stroke-width="1.300" d="M464 269L511 243M489 286L542 258M516 225L594 180M547 241L617 207M608 192L660 162M626 211L682 179M853 315L788 353M893 343L835 378M658 423L722 387M698 450L767 411"/>
<!-- raised front rim -->
<path stroke="none" fill="#dbe49f" d="M409 223Q425 212 457 210Q490 213 516 225Q560 246 583 263L650 309 732 370Q750 382 773 393Q800 404 857 423Q878 430 874 440L862 453 853 443 813 428Q780 417 767 411 745 402 725 387L642 327 580 282Q560 268 542 257 520 246 510 244 480 232 457 230 430 232 417 242z"/>
<path fill="#929a6b" stroke-width="1.300" d="M409 224L424 218 430 233 417 242 413 238z"/>
<path fill="url(#w1)" stroke-width="1.300" d="M424 219Q452 210 481 217L478 233Q450 226 430 233z"/>
<path stroke="none" fill="#eef5ad" d="M857 425q14 3 15 12l-9 13-10-8z"/>
<path stroke="#f6f8dc" stroke-width="2" d="M481 216Q500 219 516 227 560 247 583 265L650 311 732 372Q750 384 773 395 800 406 857 425"/>
<g stroke-width="1.400">
<path d="M409 223Q425 212 457 210Q490 213 516 225Q560 246 583 262L650 308 732 369Q750 381 773 392 800 403 857 422Q878 428 874 440 872 447 860 454L802 497"/>
<path d="M410 227Q425 217 457 214Q488 217 515 229 558 248 583 267L648 313 730 373Q750 386 773 397 800 408 857 427 870 430 871 438 870 446 862 452"/>
<path d="M417 242Q430 232 457 230 480 232 510 244 525 249 542 257L580 282 642 327 725 387Q745 401 767 411L813 428 853 443 862 453"/>
<path d="M413 239Q430 229 457 227 480 229 511 241 526 246 544 255L581 279 643 324 726 384Q745 398 768 408L814 425 856 440 866 450"/>
<path d="M481 215L478 233M515 227L511 244M547 242L542 257M648 311L642 327M730 371L725 387M773 394L767 411M857 425L854 442M795 503L803 496"/>
</g>
<!-- long ridge and curved border -->
<path d="M570 157L594 178 608 192 627 211 680 267 708 293 714 292 737 312 772 343Q780 350 788 353L810 368 835 378Q862 391 890 394 933 395 940 369"/>
<path stroke-width="1.200" d="M572 154L610 191 M714 292L740 312 772 340 812 367M938 377l4-9 10-12"/>
<path d="M590 201Q592 212 597 217 615 243 643 268 662 283 683 292 700 297 712 292"/>
<path fill="#c9d092" stroke-width="1.300" d="M589 200Q590 196 606 190L609 198 596 208 591 206z"/>
<path fill="#7b805c" stroke-width="1.300" d="M595 198l12-6 3 7-13 7zM600 207l17-9"/>
<!-- corner notch -->
<path fill="#c9d092" stroke-width="1.300" d="M581 97L566 117Q556 127 557 139 560 150 570 157L572 150Q569 143 576 138L592 124 586 101z"/>
<path fill="#7b805c" stroke-width="1.300" d="M584 101L592 122 575 138 568 120zM563 123L568 120 575 138 569 146 568 155Q560 146 562 135z"/>
<!-- rounded window -->
<path fill="#cdd596" d="M451 165Q450 162 453 160L495 137Q503 131 513 136L538 150Q545 154 540 160L497 185Q488 191 478 185L456 172Q451 168 451 165z"/>
<path fill="#7b805c" stroke-width="1.300" d="M456 162L495 138V146L457 170z"/>
<path fill="url(#w2)" stroke-width="1.300" d="M495 138q9-4 18-1v10q-9-4-18-1z"/>
<path fill="#dbe49f" stroke-width="1.200" d="M459 171L496 150Q505 145 513 149L534 162M513 137v10L536 160V150"/>
<path fill="#3b3b6c" stroke-width="1.400" d="M461 174L497 153Q505 147 513 152L533 164 497 185Q488 191 478 185z"/>
<!-- slot -->
<path fill="#dbe49f" stroke="none" d="M687 329L724 309 773 344 812 369 893 411 882 425 780 390 720 355z"/>
<path fill="#7b805c" stroke-width="1.300" d="M687 329L724 309V332L702 342z"/>
<path stroke-width="1.200" d="M690 331L722 314"/>
<path fill="#c6cd8f" stroke-width="1.300" d="M724 312L770 347 768 366 762 367 724 332zM770 347L809 372 808 390 765 366zM809 372L888 410 882 423 808 391z"/>
<path fill="url(#sb)" stroke-width="1.400" d="M722 355Q730 348 742 352L760 366 803 393 858 419 813 404 777 391 767 381z"/>
<path stroke-width="1.300" d="M724 309L747 327 772 345 810 370 847 387 892 410Q894 413 892 417L882 425 873 424 858 420M724 316L770 349 809 374 886 409M724 334L761 370 802 396 840 412 882 425M687 329l20 16 28 21 20 13 20 12 35 14 48 16M888 410l-5 13M888 410l4 2"/>
<path fill="#c3ca8c" d="M705 328q6-3 9 2l5 12-5 6-6-5-5-7z"/><path d="M708 329q5 2 8 17" stroke-width="1.200"/>
<!-- curved flange -->
<path stroke="none" fill="#7d8358" d="M986 378Q975 400 940 437 900 479 832 516L833 527Q895 491 940 447 975 412 988 388z"/>
<path stroke="none" fill="#b5bd83" d="M981 373Q968 398 936 431 895 473 829 511L832 517Q900 479 940 437 972 402 986 378z"/>
<path stroke-width="1.400" d="M981 373Q968 398 936 431 895 473 829 511L833 527Q895 491 940 447 975 412 988 388M986 378Q972 402 940 437 900 479 832 516"/>
</svg>

<svg class="compass position-absolute" width="110" height="120" viewBox="1120 26 110 120" fill="none" stroke="#e4ccff" stroke-width="2" role="img" aria-label="Compass">
<path fill="#1b4562" stroke="none" d="M1182 43Q1214 62 1216 101L1182 83 1148 101Q1150 62 1182 43zM1182 95L1218 115Q1212 134 1182 136 1150 134 1146 115z"/>
<path d="M1182 33v76M1182 43Q1214 62 1216 101L1182 83 1148 101Q1150 62 1182 43M1146 115L1182 95 1218 115Q1212 134 1182 136 1150 134 1146 115"/>
<circle cx="1182" cy="33" r="3" fill="#e4ccff" stroke-width="1"/><path fill="#d00000" stroke="none" d="M1178 110h9v9h-9z"/>
<g fill="#ff2" stroke="none" font-size="12"><text x="1183" y="41">z</text><text x="1214" y="111">y</text></g>
</svg>
<svg class="triad position-absolute" width="50" height="50" viewBox="1236 519 50 50" fill="none" stroke="#fff" role="img" aria-label="Axes"><path d="M1256.500 532v19l-13 8M1256.500 551l17 9"/><g fill="#fff" stroke="none" font-size="13"><text x="1255" y="532">z</text><text x="1238" y="562">x</text><text x="1274" y="562">y</text></g></svg>

<nav class="tree-clip position-absolute" aria-label="Specification tree">
<ul class="tree list-unstyled d-flex flex-column position-relative">
<li class="d-flex align-items-center"><svg class="ico"><use href="#trim"/></svg><a href="#" class="text-decoration-none">Trim.5</a></li>
<li class="d-flex align-items-center"><i class="knot"></i><svg class="ico"><use href="#offset"/></svg><a href="#" class="text-decoration-none">Offset.4</a></li>
<li class="d-flex align-items-center"><i class="knot"></i><svg class="ico"><use href="#sketch"/></svg><a href="#" class="text-decoration-none">Sketch.4</a></li>
<li class="d-flex align-items-center"><i class="knot"></i><svg class="ico"><use href="#sweep"/></svg><a href="#" class="text-decoration-none">Sweep.7</a></li>
<li class="d-flex align-items-center"><svg class="ico"><use href="#trim"/></svg><a href="#" class="text-decoration-none">Trim.6</a></li>
<li class="d-flex align-items-center"><svg class="ico"><use href="#split"/></svg><a href="#" class="text-decoration-none">Split.2</a></li>
<li class="d-flex align-items-center"><i class="knot"></i><svg class="ico"><use href="#sketch"/></svg><a href="#" class="text-decoration-none">Sketch.5</a></li>
<li class="d-flex align-items-center"><svg class="ico"><use href="#project"/></svg><a href="#" class="text-decoration-none">Project.3</a></li>
<li class="d-flex align-items-center"><svg class="ico"><use href="#split"/></svg><a href="#" class="text-decoration-none">Split.3</a></li>
<li class="d-flex align-items-center"><i class="knot"></i><svg class="ico"><use href="#sketch"/></svg><a href="#" class="text-decoration-none">Sketch.6</a></li>
<li class="d-flex align-items-center"><svg class="ico"><use href="#project"/></svg><a href="#" class="text-decoration-none">Project.4</a></li>
<li class="d-flex align-items-center"><i class="knot"></i><svg class="ico"><use href="#offset"/></svg><a href="#" class="text-decoration-none">Offset.5</a></li>
<li class="d-flex align-items-center"><i class="knot"></i><svg class="ico"><use href="#sweep"/></svg><a href="#" class="text-decoration-none">Sweep.8</a></li>
<li class="d-flex align-items-center"><svg class="ico"><use href="#trim"/></svg><a href="#" class="text-decoration-none">Trim.7</a></li>
<li class="d-flex align-items-center"><svg class="ico"><use href="#trim"/></svg><a href="#" class="text-decoration-none">Trim.9</a></li>
<li class="d-flex align-items-center"><i class="knot"></i><svg class="ico"><use href="#sketch"/></svg><a href="#" class="text-decoration-none">Sketch.7</a></li>
<li class="d-flex align-items-center"><svg class="ico"><use href="#project"/></svg><a href="#" class="text-decoration-none">Project.5</a></li>
<li class="d-flex align-items-center"><svg class="ico"><use href="#split"/></svg><a href="#" class="text-decoration-none">Split.4</a></li>
<li class="d-flex align-items-center"><i class="knot"></i><svg class="ico"><use href="#plane"/></svg><a href="#" class="text-decoration-none">Plane.1</a></li>
<li class="d-flex align-items-center"><i class="knot"></i><svg class="ico"><use href="#sketch"/></svg><a href="#" class="text-decoration-none">Sketch.8</a></li>
<li class="d-flex align-items-center"><svg class="ico"><use href="#plane"/></svg><a href="#" class="text-decoration-none">Plane.2</a></li>
<li class="d-flex align-items-center"><i class="knot"></i><svg class="ico"><use href="#sketch"/></svg><a href="#" class="text-decoration-none">Sketch.10</a></li>
</ul>
</nav>

<section class="pal position-absolute" style="left:162px;top:2px">
<header class="d-flex"><h2 class="flex-grow-1">Operations</h2><button class="shut" aria-label="Close">x</button></header>
<div class="across d-flex align-items-center"><span class="grip"></span>
<button class="tool drop" aria-label="Join"><svg><use href="#join"/></svg></button><button class="tool drop" aria-label="Split"><svg><use href="#split"/></svg></button><button class="tool drop" aria-label="Extract"><svg><use href="#dome"/></svg></button><button class="tool drop" aria-label="Fillet"><svg><use href="#fillet"/></svg></button><button class="tool drop" aria-label="Symmetry"><svg><use href="#mirror"/></svg></button><button class="tool drop" aria-label="Extrapolate"><svg><use href="#extrap"/></svg></button></div>
</section>

<section class="pal position-absolute" style="left:372px;top:1px">
<header class="d-flex"><h2 class="flex-grow-1">Wireframe</h2><button class="shut" aria-label="Close">x</button></header>
<div class="across d-flex align-items-center"><span class="grip"></span>
<button class="tool drop" aria-label="Point"><svg><use href="#point"/></svg></button><button class="tool drop" aria-label="Line"><svg><use href="#line"/></svg></button><button class="tool drop" aria-label="Plane"><svg><use href="#pln"/></svg></button><span class="rule"></span><button class="tool drop" aria-label="Projection"><svg><use href="#proj"/></svg></button><button class="tool" aria-label="Intersection"><svg><use href="#inter"/></svg></button><button class="tool drop" aria-label="Parallel curve"><svg><use href="#para"/></svg></button><span class="rule"></span><button class="tool drop" aria-label="Circle"><svg><use href="#circ"/></svg></button><button class="tool drop" aria-label="Spline"><svg><use href="#spl"/></svg></button></div>
</section>

<section class="pal slender position-absolute" style="right:193px;top:17px">
<header class="d-flex"><h2 class="flex-grow-1">B</h2><button class="shut" aria-label="Close">x</button></header>
<div class="down d-flex flex-column"><span class="grip"></span>
<button class="tool" aria-label="Junction"><svg><use href="#fillp"/></svg></button><button class="tool" aria-label="Loft"><svg><use href="#loft"/></svg></button><button class="tool drop" aria-label="Hole"><svg><use href="#hole"/></svg></button><button class="tool" aria-label="Mating flange"><svg><use href="#blend"/></svg></button><button class="tool" aria-label="Bead"><svg><use href="#poly"/></svg></button></div>
</section>

<section class="pal slim-pal position-absolute" style="right:123px;top:10px">
<header class="d-flex"><h2 class="flex-grow-1">A</h2><button class="shut" aria-label="Close">x</button></header>
<div class="down d-flex flex-column"><span class="grip"></span>
<button class="tool" aria-label="Bump"><svg><use href="#bump"/></svg></button><button class="tool" aria-label="Wrap curve"><svg><use href="#lay"/></svg></button><button class="tool" aria-label="Wrap surface"><svg><use href="#lay2"/></svg></button><button class="tool" aria-label="Shape morphing"><svg><use href="#dev"/></svg></button></div>
</section>

<section class="pal slender position-absolute" style="right:5px;top:-2px">
<header class="d-flex"><h2 class="flex-grow-1">R</h2><button class="shut" aria-label="Close">x</button></header>
<div class="down d-flex flex-column"><span class="grip"></span>
<button class="tool drop" aria-label="Object repetition"><svg><use href="#repeat"/></svg></button><button class="tool drop" aria-label="Rectangular pattern"><svg><use href="#gridp"/></svg></button><button class="tool" aria-label="Duplicate"><svg><use href="#clipcat"/></svg></button><button class="tool drop" aria-label="Catalog"><svg><use href="#book"/></svg></button><button class="tool drop" aria-label="Power copy"><svg><use href="#plant"/></svg></button></div>
</section>

<section class="pal slender position-absolute" style="right:130px;top:252px">
<header class="d-flex"><h2 class="flex-grow-1">S</h2><button class="shut" aria-label="Close">x</button></header>
<div class="down d-flex flex-column"><span class="grip"></span>
<button class="tool drop" aria-label="Extrude"><svg><use href="#vec"/></svg></button><button class="tool drop" aria-label="Offset"><svg><use href="#offset"/></svg></button><button class="tool drop" aria-label="Sweep"><svg><use href="#sweep"/></svg></button><button class="tool" aria-label="Fill"><svg><use href="#fillc"/></svg></button><button class="tool" aria-label="Multi-section surface"><svg><use href="#multi"/></svg></button><button class="tool" aria-label="Blend"><svg><use href="#blnd"/></svg></button></div>
</section>
</main>

<aside class="side down d-flex flex-column flex-shrink-0 overflow-hidden">
<span class="grip mt-0"></span>
<button class="tool big" aria-label="Workbench"><svg><use href="#wb"/></svg></button><span class="grip"></span>
<button class="tool" aria-label="Insert body"><svg><use href="#ghost"/></svg></button><button class="tool" aria-label="Insert set"><svg><use href="#ghost"/></svg></button><button class="tool" aria-label="Insert ordered set"><svg><use href="#ghost"/></svg></button><button class="tool" aria-label="Insert group"><svg><use href="#ghost"/></svg></button><span class="grip"></span>
<button class="tool drop" aria-label="Select"><svg><use href="#sel"/></svg></button><button class="tool drop" aria-label="Selection filter"><svg><use href="#trap"/></svg></button><span class="grip"></span>
<button class="tool drop" aria-label="Sketch"><svg><use href="#skt"/></svg></button><span class="grip"></span>
<button class="tool" aria-label="Law"><svg><use href="#graph"/></svg></button><span class="grip"></span>
<button class="tool" aria-label="Wizard"><svg><use href="#wand"/></svg></button><span class="grip far"></span>
<button class="tool" aria-label="Connect checker"><svg><use href="#cube3"/></svg></button><button class="tool" aria-label="Distance analysis"><svg><use href="#updn"/></svg></button><button class="tool" aria-label="Curvature analysis"><svg><use href="#curv"/></svg></button><span class="grip"></span>
<button class="tool drop" aria-label="Knowledge"><svg><use href="#gears"/></svg></button><button class="tool drop" aria-label="Apply material"><svg><use href="#hand2"/></svg></button>
</aside>
</div>

<footer class="flex-shrink-0">
<div class="across bottom d-flex align-items-center">
<button class="tool" style="width:6px" aria-label="New"><svg viewBox="0 0 20 20"><path d="M7 1v17H0"/></svg></button>
<button class="tool" aria-label="Open"><svg><use href="#open"/></svg></button><button class="tool" aria-label="Save"><svg><use href="#save"/></svg></button><button class="tool" aria-label="Print"><svg><use href="#print"/></svg></button><button class="tool" aria-label="Cut"><svg><use href="#cut"/></svg></button><button class="tool" aria-label="Copy"><svg><use href="#copy"/></svg></button><button class="tool" aria-label="Paste"><svg><use href="#paste"/></svg></button><button class="tool drop" aria-label="Undo"><svg><use href="#undo"/></svg></button><button class="tool drop" aria-label="Redo"><svg><use href="#redo"/></svg></button><button class="tool" aria-label="What's this"><svg><use href="#help"/></svg></button><span class="grip"></span>
<button class="tool" aria-label="Formula"><svg><use href="#fx"/></svg></button><button class="tool" aria-label="Comment"><svg><use href="#note"/></svg></button><button class="tool slim" aria-label="Check"><svg><use href="#ghost2"/></svg></button><button class="tool drop" aria-label="Design table"><svg><use href="#tbl"/></svg></button><button class="tool" aria-label="Relations"><svg><use href="#links"/></svg></button><button class="tool drop" aria-label="Lock"><svg><use href="#lock"/></svg></button><button class="tool" aria-label="Equivalent dimensions"><svg><use href="#equ"/></svg></button><span class="grip"></span>
<button class="tool" aria-label="Fly mode"><svg><use href="#fly"/></svg></button><button class="tool" aria-label="Fit all in"><svg><use href="#fit"/></svg></button><button class="tool" aria-label="Pan"><svg><use href="#pan"/></svg></button><button class="tool" aria-label="Rotate"><svg><use href="#rot"/></svg></button><button class="tool" aria-label="Zoom in"><svg><use href="#zin"/></svg></button><button class="tool" aria-label="Zoom out"><svg><use href="#zout"/></svg></button><button class="tool" aria-label="Normal view"><svg><use href="#norm"/></svg></button><button class="tool" aria-label="Multi-view"><svg><use href="#views"/></svg></button><button class="tool drop" aria-label="Isometric view"><svg><use href="#iso"/></svg></button><button class="tool drop" aria-label="Shading"><svg><use href="#shade"/></svg></button><button class="tool" aria-label="Hide/Show"><svg><use href="#hide"/></svg></button><button class="tool" aria-label="Swap visible space"><svg><use href="#swap"/></svg></button><span class="tick"><i></i></span><span class="grip"></span>
<button class="tool" aria-label="Manipulate"><svg><use href="#move"/></svg></button><span class="grip"></span>
<button class="tool" aria-label="Measure between"><svg><use href="#meas"/></svg></button><button class="tool" aria-label="Measure item"><svg><use href="#clamp"/></svg></button><button class="tool" aria-label="Measure inertia"><svg><use href="#mass"/></svg></button><span class="grip"></span>
<button class="tool" aria-label="Capture"><svg><use href="#cam"/></svg></button><span class="grip"></span>
<button class="tool" aria-label="Update all"><svg><use href="#upd"/></svg></button><button class="tool" aria-label="Manual update"><svg><use href="#hand"/></svg></button><button class="tool" aria-label="Axis system"><svg><use href="#axis"/></svg></button><button class="tool" aria-label="Historical graph"><svg><use href="#flow"/></svg></button><button class="tool drop" aria-label="Work on support"><svg><use href="#mesh"/></svg></button><button class="tool drop" aria-label="Bounding box"><svg><use href="#box"/></svg></button>
<a href="#" class="more align-self-start">»</a>
<svg class="logo ms-auto" viewBox="1278 582 52 37" role="img" aria-label="DS CATIA"><path d="M1293 584q8 0 8 2 0 2-7 5 6 0 4 3l-4 3" fill="none" stroke="#d92b2b" stroke-width="2"/><path d="M1287 595q8-1 8 1-1 7-10 8l5-7" fill="none" stroke="#3b2d86" stroke-width="2"/><path d="M1307 593q-9-1-8 2 1 2 4 4 2 4-7 5" fill="none" stroke="#f59a23" stroke-width="2.500"/><text x="1290" y="612" font-family="Liberation Sans,sans-serif" font-size="11" font-weight="700" font-style="italic" fill="#33307c">CATIA</text></svg>
</div>
<div class="foot"></div>
</footer>
<script src="https://cdn.jsdelivr.net/npm/bootstrap@5.3.0/dist/js/bootstrap.bundle.min.js"></script>
</body>
</html>
